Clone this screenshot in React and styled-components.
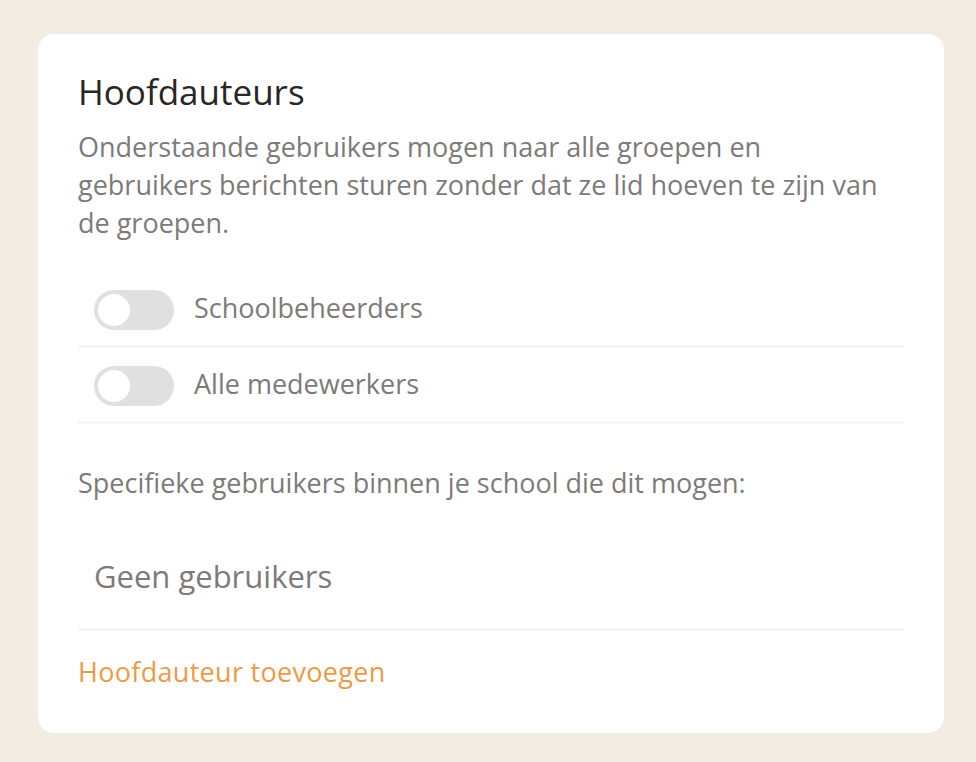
import React, { useState } from "react";
import styled, { createGlobalStyle } from "styled-components";

const Global = createGlobalStyle`
  html, body {
    margin: 0;
    background: #f3ece5;
  }
  body {
    font-family: "Open Sans", "Noto Sans", sans-serif;
  }
`;

const Page = styled.div`
  padding: 34px 32px 30px 38px;
`;

const Card = styled.section`
  background: #ffffff;
  border-radius: 16px;
  padding: 38px 40px 42px 40px;
`;

const Title = styled.h2`
  margin: 0;
  font-size: 35px;
  line-height: 40px;
  font-weight: 400;
  color: #2a2624;
`;

const Intro = styled.p`
  margin: 16px 0 0;
  max-width: 815px;
  font-size: 27px;
  line-height: 38px;
  color: #7e7a78;
`;

const ToggleList = styled.div`
  margin-top: 30px;
`;

const Row = styled.label`
  display: flex;
  align-items: center;
  gap: 20px;
  padding: 18px 16px 15px;
  border-bottom: 3px solid #f6f6f6;
  cursor: pointer;
`;

const Track = styled.span`
  position: relative;
  flex: none;
  width: 80px;
  height: 40px;
  border-radius: 20px;
  background: ${(p) => (p.$on ? "#ee9a45" : "#e0e0e0")};
  transition: background 0.2s;
`;

const Knob = styled.span`
  position: absolute;
  top: 4px;
  left: ${(p) => (p.$on ? "44px" : "4px")};
  width: 32px;
  height: 32px;
  border-radius: 50%;
  background: #ffffff;
  transition: left 0.2s;
`;

const Label = styled.span`
  font-size: 27px;
  line-height: 38px;
  margin-top: -5px;
  color: #7e7a78;
`;

const SubHead = styled.p`
  margin: 40px 0 0;
  font-size: 27px;
  line-height: 38px;
  color: #7e7a78;
`;

const Empty = styled.div`
  padding: 54px 16px 32px;
  font-size: 31px;
  line-height: 40px;
  color: #7e7a78;
  border-bottom: 3px solid #f6f6f6;
`;

const AddLink = styled.a`
  display: block;
  margin-top: 22px;
  font-size: 27px;
  line-height: 38px;
  letter-spacing: 0.3px;
  color: #ee9a45;
  text-decoration: none;
  cursor: pointer;
`;

function Toggle({ label }) {
  const [on, setOn] = useState(false);
  return (
    <Row onClick={() => setOn(!on)}>
      <Track $on={on}>
        <Knob $on={on} />
      </Track>
      <Label>{label}</Label>
    </Row>
  );
}

export default function App() {
  return (
    <Page>
      <Global />
      <Card>
        <Title>Hoofdauteurs</Title>
        <Intro>
          Onderstaande gebruikers mogen naar alle groepen en gebruikers berichten
          sturen zonder dat ze lid hoeven te zijn van de groepen.
        </Intro>
        <ToggleList>
          <Toggle label="Schoolbeheerders" />
          <Toggle label="Alle medewerkers" />
        </ToggleList>
        <SubHead>Specifieke gebruikers binnen je school die dit mogen:</SubHead>
        <Empty>Geen gebruikers</Empty>
        <AddLink>Hoofdauteur toevoegen</AddLink>
      </Card>
    </Page>
  );
}
